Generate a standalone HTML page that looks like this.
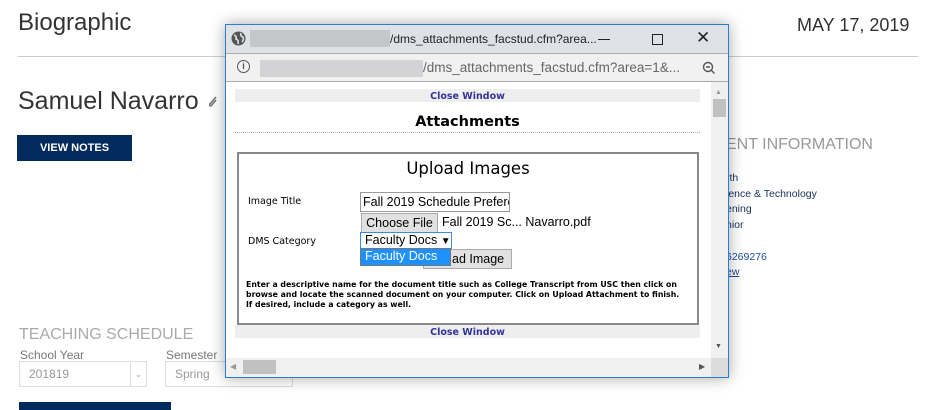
<!DOCTYPE html>
<html><head><style>
*{margin:0;padding:0;box-sizing:border-box}
body{width:936px;height:410px;overflow:hidden;background:#fff;font-family:"Liberation Sans",Arial,sans-serif;position:relative}
.a{position:absolute;white-space:nowrap}
.v{font-family:Verdana,"DejaVu Sans",sans-serif}
</style></head><body>
<div class="a" style="left:18px;top:9px;font-size:24px;color:#333">Biographic</div>
<div class="a" style="left:797px;top:15px;font-size:18px;color:#333">MAY 17, 2019</div>
<div class="a" style="left:18px;top:56px;width:900px;height:1px;background:#ccc"></div>
<div class="a" style="left:18px;top:87px;font-size:25px;color:#333">Samuel Navarro</div>
<svg class="a" style="left:207px;top:95px" width="12" height="14" viewBox="0 0 12 14"><path d="M9 2 L3 9 Q2 11 4 11 L9 5" stroke="#777" stroke-width="1.6" fill="none"/></svg>
<div class="a" style="left:17px;top:135px;width:115px;height:26px;background:#002b5c;color:#fff;font-size:11px;font-weight:bold;text-align:center;line-height:26px">VIEW NOTES</div>
<div class="a" style="left:726px;top:136px;font-size:16px;color:#999">ENT INFORMATION</div>
<div class="a" style="left:726px;top:171px;font-size:10.5px;color:#1b2f5a;line-height:15.7px">rth<br>ience &amp; Technology<br>ening<br>nior<br><br><span style="color:#1a4b9a">6269276</span><br><u style="color:#1a4b9a">ew</u></div>
<div class="a" style="left:19px;top:326px;font-size:16px;color:#aaa">TEACHING SCHEDULE</div>
<div class="a" style="left:20px;top:348px;font-size:12px;color:#777">School Year</div>
<div class="a" style="left:166px;top:348px;font-size:12px;color:#777">Semester</div>
<div class="a" style="left:19px;top:361px;width:128px;height:26px;border:1px solid #ddd"><span style="position:absolute;left:9px;top:5px;font-size:12px;color:#999">201819</span><span style="position:absolute;right:0;top:0;width:16px;height:24px;border-left:1px solid #ddd;font-size:9px;color:#aaa;text-align:center;line-height:24px">⌄</span></div>
<div class="a" style="left:165px;top:361px;width:128px;height:26px;border:1px solid #ddd"><span style="position:absolute;left:9px;top:5px;font-size:12px;color:#999">Spring</span></div>
<div class="a" style="left:19px;top:402px;width:152px;height:8px;background:#002b5c"></div>

<div class="a" style="left:225px;top:24px;width:504px;height:354px;border:1px solid #2b7cd3;background:#fff;box-shadow:0 0 14px rgba(0,0,0,.35)">
 <div class="a" style="left:0;top:0;width:502px;height:28px;background:#dee1e6"></div>
 <svg class="a" style="left:5px;top:6px" width="15" height="15" viewBox="0 0 15 15"><circle cx="7.5" cy="7.5" r="7" fill="#555"/><path d="M3 4 Q6 5 5 8 Q8 9 7 13 M10 2 Q9 5 12 6 Q13 9 11 11" stroke="#dee1e6" stroke-width="1.6" fill="none"/></svg>
 <div class="a" style="left:24px;top:5px;width:140px;height:17px;background:#c4c6ca"></div>
 <div class="a" style="left:164px;top:7px;font-size:12px;color:#222">/dms_attachments_facstud.cfm?area...</div>
 <div class="a" style="left:372px;top:14px;width:12px;height:1px;background:#222"></div>
 <div class="a" style="left:426px;top:9px;width:11px;height:11px;border:1px solid #222"></div>
 <div class="a" style="left:470px;top:3px;font-size:17px;color:#222">✕</div>
 <div class="a" style="left:0;top:28px;width:502px;height:1px;background:#aaa"></div>
 <div class="a" style="left:0;top:29px;width:502px;height:27px;background:#f1f1f1"></div>
 <div class="a" style="left:11px;top:35px;width:13px;height:13px;border:1.5px solid #555;border-radius:50%;font-size:9px;font-weight:bold;color:#555;text-align:center;line-height:10px">i</div>
 <div class="a" style="left:34px;top:35px;width:163px;height:17px;background:#d3d3d5"></div>
 <div class="a" style="left:197px;top:35px;font-size:13.5px;color:#666">/dms_attachments_facstud.cfm?area=1&amp;...</div>
 <svg class="a" style="left:476px;top:36px" width="14" height="14" viewBox="0 0 14 14"><circle cx="6" cy="6" r="4.5" stroke="#555" stroke-width="1.4" fill="none"/><path d="M4 6h4M9.5 9.5l3 3" stroke="#555" stroke-width="1.4"/></svg>
 <div class="a" style="left:0;top:56px;width:502px;height:1px;background:#aaa"></div>
 <div class="a" style="left:485px;top:57px;width:17px;height:276px;background:#f0f0f0"></div>
 <div class="a" style="left:489px;top:64px;font-size:7px;color:#999">▲</div>
 <div class="a" style="left:487px;top:74px;width:13px;height:18px;background:#c1c1c1"></div>
 <div class="a" style="left:489px;top:318px;font-size:7px;color:#555">▼</div>
 <div class="a" style="left:0;top:333px;width:485px;height:19px;background:#f0f0f0"></div>
 <div class="a" style="left:4px;top:337px;font-size:8px;color:#999">◀</div>
 <div class="a" style="left:17px;top:335px;width:33px;height:14px;background:#c1c1c1"></div>
 <div class="a" style="left:473px;top:337px;font-size:8px;color:#555">▶</div>
 <div class="a" style="left:485px;top:333px;width:17px;height:19px;background:#dcdcdc"></div>

 <div class="a v" style="left:9px;top:64px;width:465px;height:13px;background:#eee;font-size:9.5px;font-weight:bold;color:#333399;text-align:center;line-height:15px">Close Window</div>
 <div class="a v" style="left:9px;top:89px;width:465px;text-align:center;font-size:14.5px;font-weight:bold;color:#000">Attachments</div>
 <div class="a" style="left:9px;top:107px;width:465px;border-top:1px dotted #aaa"></div>
 <div class="a" style="left:11px;top:127px;width:462px;height:173px;border:2px solid #888"></div>
 <div class="a v" style="left:11px;top:134px;width:462px;text-align:center;font-size:16.5px;color:#000">Upload Images</div>
 <div class="a v" style="left:22px;top:171px;font-size:9.5px;color:#000">Image Title</div>
 <div class="a v" style="left:22px;top:211px;font-size:9.5px;color:#000">DMS Category</div>
 <div class="a" style="left:134px;top:167px;width:150px;height:20px;border:1px solid #999;font-size:12.5px;padding:2px 0 0 2px;overflow:hidden">Fall 2019 Schedule Prefere</div>
 <div class="a" style="left:135px;top:188px;width:77px;height:20px;border:1px solid #aaa;background:#e1e1e1;font-size:12.5px;text-align:center;line-height:18px">Choose File</div>
 <div class="a" style="left:216px;top:190px;font-size:12.5px">Fall 2019 Sc... Navarro.pdf</div>
 <div class="a" style="left:197px;top:224px;width:89px;height:20px;border:1px solid #aaa;background:#e1e1e1;font-size:12.5px;padding:2px 0 0 28px">ad Image</div>
 <div class="a" style="left:134px;top:207px;width:92px;height:17px;border:1px solid #3b8be0;background:#fff;font-size:12.5px;padding:0 0 0 4px;line-height:15px">Faculty Docs <span style="font-size:10px">▼</span></div>
 <div class="a" style="left:134px;top:223px;width:91px;height:18px;background:#1e90ff;border:1px solid #777;color:#fff;font-size:12.5px;padding-left:4px;line-height:15px">Faculty Docs</div>
 <div class="a v" style="left:20px;top:255px;font-size:7.8px;font-weight:bold;color:#000;line-height:10px">Enter a descriptive name for the document title such as College Transcript from USC then click on<br>browse and locate the scanned document on your computer. Click on Upload Attachment to finish.<br>If desired, include a category as well.</div>
 <div class="a v" style="left:9px;top:300px;width:465px;height:13px;background:#eee;font-size:9.5px;font-weight:bold;color:#333399;text-align:center;line-height:15px">Close Window</div>
</div>
</body></html>
